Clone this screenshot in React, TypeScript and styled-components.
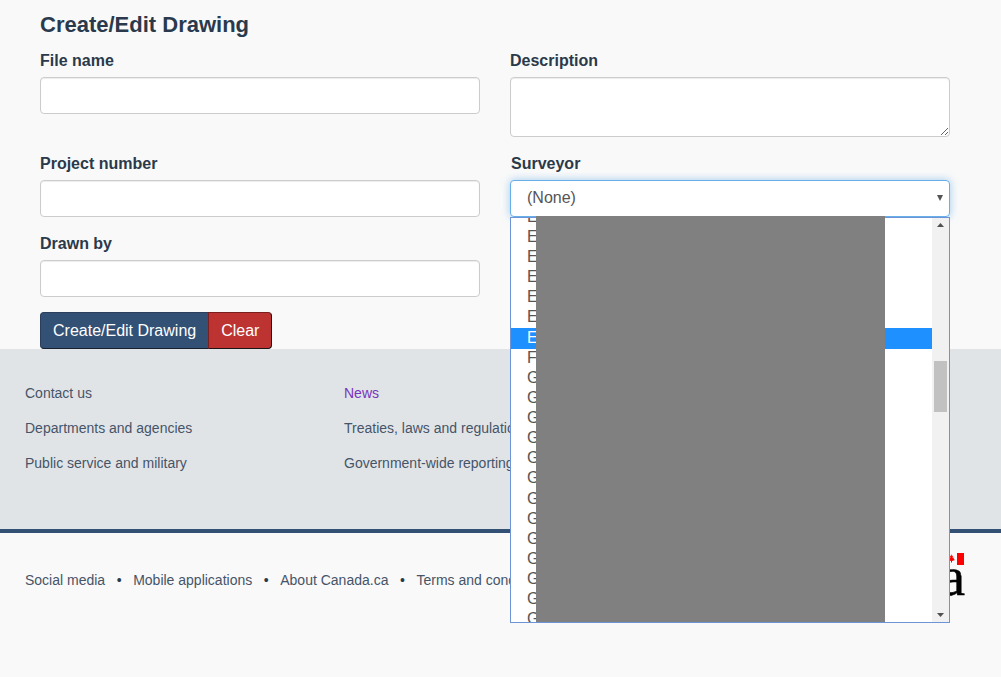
import React from "react";
import styled, { createGlobalStyle } from "styled-components";

const Global = createGlobalStyle`
  html, body { margin: 0; padding: 0; background: #f9f9f9; }
  body { font-family: "Liberation Sans", Arial, sans-serif; color: #2b3a4a; overflow: hidden; }
  * { box-sizing: border-box; }
`;

const Page = styled.div`
  position: relative;
  width: 1001px;
  height: 677px;
  overflow: hidden;
`;

const Form = styled.form`
  height: 349px;
  padding: 12px 51px 0 40px;
`;

const Title = styled.h2`
  margin: 0 0 12px;
  height: 26px;
  font-size: 22px;
  line-height: 26px;
  font-weight: 700;
  color: #2a3a4c;
`;

const Columns = styled.div`
  display: grid;
  grid-template-columns: 440px 440px;
  column-gap: 30px;
`;

const Column = styled.div`
  display: flex;
  flex-direction: column;
`;

const Field = styled.div<{ $h: number }>`
  height: ${(p) => p.$h}px;
`;

const Label = styled.label<{ $inset?: number }>`
  display: block;
  height: 27px;
  padding: 1px 0 0 ${(p) => p.$inset ?? 0}px;
  font-size: 16px;
  line-height: 20px;
  font-weight: 700;
  color: #2b3a4a;
`;

const Input = styled.input`
  display: block;
  width: 100%;
  height: 37px;
  background: #fff;
  border: 1px solid #ccc;
  border-radius: 4px;
  box-shadow: inset 0 1px 1px rgba(0, 0, 0, 0.075);
`;

const Area = styled.textarea`
  display: block;
  width: 100%;
  height: 60px;
  background: #fff;
  border: 1px solid #ccc;
  border-radius: 4px;
  box-shadow: inset 0 1px 1px rgba(0, 0, 0, 0.075);
`;

const SelectBox = styled.div`
  position: relative;
  height: 37px;
  padding-left: 16px;
  background: #fff;
  border: 1px solid #66afe9;
  border-radius: 4px;
  box-shadow: 0 0 8px rgba(102, 175, 233, 0.6);
  font-size: 16px;
  line-height: 34px;
  color: #555;
`;

const Caret = styled.span`
  position: absolute;
  right: 6px;
  top: 14px;
  width: 0;
  height: 0;
  border-left: 3.5px solid transparent;
  border-right: 3.5px solid transparent;
  border-top: 6px solid #555;
`;

const Buttons = styled.div`
  display: flex;
  margin-top: 15px;
`;

const Btn = styled.button<{ $red?: boolean }>`
  height: 37px;
  padding: 0 12px;
  font: 16px/20px "Liberation Sans", Arial, sans-serif;
  color: #fff;
  background: ${(p) => (p.$red ? "#bc3331" : "#335075")};
  border: 1px solid ${(p) => (p.$red ? "#7a1f1f" : "#2b3f5c")};
  border-radius: ${(p) => (p.$red ? "0 4px 4px 0" : "4px 0 0 4px")};
  ${(p) => (p.$red ? "border-color: #7a1f1f #1f1414 #1f1414 #7a1f1f;" : "border-bottom-color:#16202e;")}
  margin-left: ${(p) => (p.$red ? "-1px" : "0")};
`;

const LinksBand = styled.section`
  height: 180px;
  padding: 34px 25px 0;
  background: #e1e4e7;
  display: grid;
  grid-template-columns: repeat(3, 319px);
  align-content: start;
`;

const LinkColumn = styled.ul`
  list-style: none;
  margin: 0;
  padding: 0;
  display: flex;
  flex-direction: column;
  gap: 15px;
`;

const FootLink = styled.a<{ $visited?: boolean }>`
  display: block;
  height: 20px;
  font-size: 14px;
  line-height: 20px;
  white-space: nowrap;
  color: ${(p) => (p.$visited ? "#7834bc" : "#465468")};
`;

const BottomBar = styled.footer`
  position: relative;
  height: 148px;
  border-top: 4px solid #335075;
  padding: 37px 25px 0;
  display: flex;
  align-items: flex-start;
`;

const BottomLink = styled.a`
  font-size: 14px;
  line-height: 20px;
  white-space: nowrap;
  color: #465468;
`;

const Dot = styled.span`
  width: 28px;
  text-align: center;
  font-size: 14px;
  line-height: 20px;
  color: #2b3a4a;
`;

const Wordmark = styled.div`
  position: absolute;
  right: 36px;
  top: 14px;
  font: 400 54px/60px "Liberation Serif", "Times New Roman", serif;
  -webkit-text-stroke: 0.6px #000;
  color: #000;
`;

const Flag = styled.svg`
  position: absolute;
  right: 37px;
  top: 20px;
`;

const Dropdown = styled.div`
  position: absolute;
  left: 510px;
  top: 217px;
  width: 440px;
  height: 406px;
  background: #fff;
  border: 1px solid #6e94d8;
  overflow: hidden;
`;

const List = styled.ul`
  list-style: none;
  margin: -11.35px 17px 0 0;
  padding: 0;
`;

const Item = styled.li<{ $on?: boolean }>`
  height: 20.15px;
  padding-left: 16px;
  font-size: 16px;
  line-height: 20px;
  color: ${(p) => (p.$on ? "#fff" : "#555")};
  background: ${(p) => (p.$on ? "#1e90ff" : "transparent")};
  box-shadow: ${(p) => (p.$on ? "0 1px 0 #1e90ff" : "none")};
`;

const Mask = styled.div`
  position: absolute;
  left: 536px;
  top: 216px;
  width: 349px;
  height: 406px;
  background: #808080;
`;

const Track = styled.div`
  position: absolute;
  right: 0;
  top: 0;
  bottom: 0;
  width: 17px;
  background: #f1f1f1;
`;

const Thumb = styled.div`
  position: absolute;
  left: 2px;
  top: 143px;
  width: 13px;
  height: 51px;
  background: #c1c1c1;
`;

const Arrow = styled.svg<{ $end: "top" | "bottom" }>`
  position: absolute;
  left: 5px;
  ${(p) => p.$end}: 5px;
`;

const rows = [..."EEEEEEE", "F", ..."GGGGGGGGGGGGGGG"];

const left = ["Contact us", "Departments and agencies", "Public service and military"];
const middle = ["News", "Treaties, laws and regulations", "Government-wide reporting"];
const right = ["Prime Minister", "How government works", "Open government"];
const bottom = ["Social media", "Mobile applications", "About Canada.ca", "Terms and conditions", "Privacy"];

export default function App() {
  return (
    <Page>
      <Global />
      <Form>
        <Title>Create/Edit Drawing</Title>
        <Columns>
          <Column>
            <Field $h={103}>
              <Label>File name</Label>
              <Input />
            </Field>
            <Field $h={80}>
              <Label>Project number</Label>
              <Input />
            </Field>
            <Field $h={64}>
              <Label>Drawn by</Label>
              <Input />
            </Field>
            <Buttons>
              <Btn type="button">Create/Edit Drawing</Btn>
              <Btn type="button" $red>Clear</Btn>
            </Buttons>
          </Column>
          <Column>
            <Field $h={103}>
              <Label>Description</Label>
              <Area />
            </Field>
            <Field $h={80}>
              <Label $inset={1}>Surveyor</Label>
              <SelectBox>
                (None)
                <Caret />
              </SelectBox>
            </Field>
          </Column>
        </Columns>
      </Form>
      <LinksBand>
        <LinkColumn>
          {left.map((t) => <li key={t}><FootLink>{t}</FootLink></li>)}
        </LinkColumn>
        <LinkColumn>
          {middle.map((t) => <li key={t}><FootLink $visited={t === "News"}>{t}</FootLink></li>)}
        </LinkColumn>
        <LinkColumn>
          {right.map((t) => <li key={t}><FootLink>{t}</FootLink></li>)}
        </LinkColumn>
      </LinksBand>
      <BottomBar>
        {bottom.map((t, i) => (
          <React.Fragment key={t}>
            {i > 0 && <Dot>•</Dot>}
            <BottomLink>{t}</BottomLink>
          </React.Fragment>
        ))}
        <Wordmark>Canada</Wordmark>
        <Flag width="16" height="12" viewBox="0 0 16 12">
          <rect x="9" width="7" height="12" fill="#f00" />
          <path d="M4 1l1 2 1-.5L5.600 5 7 4.500 6.700 6 8 7 5 8v1.500H4V8L1 7l1.300-1L2 4.500 3.400 5 3 2.500 4 3z" fill="#f00" transform="translate(-1 0)" />
        </Flag>
      </BottomBar>
      <Dropdown>
        <List>
          {rows.map((c, i) => <Item key={i} $on={i === 6}>{c}</Item>)}
        </List>
        <Track>
          <Arrow $end="top" width="7" height="4" viewBox="0 0 7 4"><path d="M3.500 0L7 4H0z" fill="#505050" /></Arrow>
          <Thumb />
          <Arrow $end="bottom" width="7" height="4" viewBox="0 0 7 4"><path d="M0 0h7L3.500 4z" fill="#505050" /></Arrow>
        </Track>
      </Dropdown>
      <Mask />
    </Page>
  );
}
